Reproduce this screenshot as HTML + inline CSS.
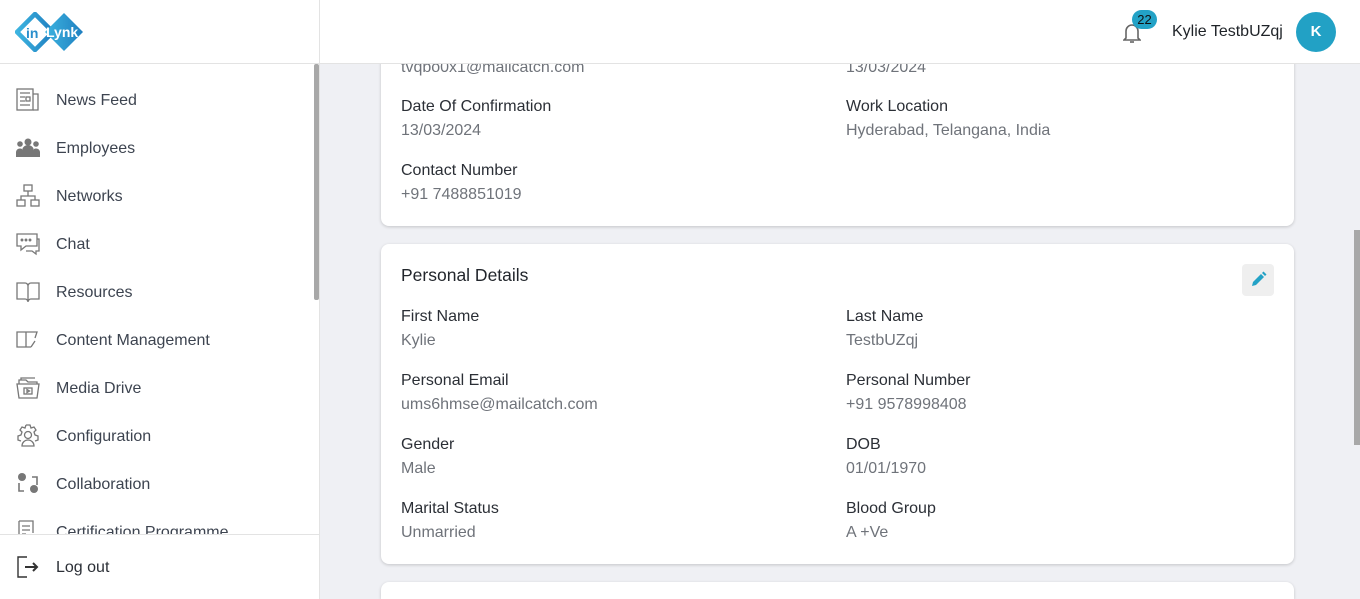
<!DOCTYPE html>
<html><head><style>
*{margin:0;padding:0;box-sizing:border-box}
html,body{width:1360px;height:599px;overflow:hidden}
body{background:#eff0f4;font-family:"Liberation Sans",sans-serif;position:relative}
.side{position:absolute;left:0;top:0;width:320px;height:599px;background:#fff;border-right:1px solid #e3e3e3}
.logo{height:64px;border-bottom:1px solid #e3e3e3;position:relative}
.nav{position:absolute;top:64px;left:0;width:319px;height:470px;overflow:hidden}
.item{position:absolute;left:0;height:48px;width:300px;font-size:16px;color:#3d4450}
.item svg{position:absolute;left:15px;top:11px;width:26px;height:26px}
.item span{position:absolute;left:56px;top:16px;white-space:nowrap}
.sb{position:absolute;left:314px;top:64px;width:5px;height:236px;background:#a8a8a8;border-radius:2px}
.logout{position:absolute;top:534px;left:0;width:319px;height:65px;border-top:1px solid #e3e3e3}
.top{position:absolute;left:320px;top:0;width:1040px;height:64px;background:#fff;border-bottom:1px solid #e3e3e3;z-index:2}
.card{position:absolute;left:381px;width:913px;background:#fff;border-radius:8px;box-shadow:0 1px 3px rgba(0,0,0,.18)}
.l{position:absolute;font-size:16px;color:#2b2f36}
.v{position:absolute;font-size:16px;color:#6f737a}
</style></head><body>
<div class="side">
 <div class="logo">
  <svg width="70" height="40" viewBox="0 0 70 40" style="position:absolute;left:15px;top:12px">
   <defs><linearGradient id="g" x1="0" x2="1"><stop offset="0" stop-color="#3db4e0"/><stop offset="1" stop-color="#1f7fc0"/></linearGradient></defs>
   <path d="M20 2 L38 20 L20 38 L2 20 Z" fill="none" stroke="url(#g)" stroke-width="4.5" stroke-linejoin="round"/>
   <path d="M49 1 L68 20 L49 39 L30 20 Z" fill="url(#g)"/>
   <text x="11" y="26" font-size="14" font-weight="bold" fill="#2a8fcc" font-family="Liberation Sans">in</text>
   <text x="31" y="25" font-size="14" font-weight="bold" fill="#fff" font-family="Liberation Sans">Lynk</text>
  </svg>
 </div>
 <div class="nav">
  <div class="item" style="top:12px"><svg viewBox="0 0 26 26" fill="none" stroke="#777" stroke-width="1.3"><rect x="2" y="2" width="16" height="21"/><path d="M18 7h5v16H18M5 6h10M5 10h5M5 14h5M5 18h10"/><rect x="11" y="10" width="4" height="4"/></svg><span>News Feed</span></div>
  <div class="item" style="top:60px"><svg viewBox="0 0 26 26" fill="#777"><circle cx="13" cy="7" r="3.5"/><circle cx="5" cy="9" r="2.8"/><circle cx="21" cy="9" r="2.8"/><path d="M7 22v-6a6 6 0 0 1 12 0v6zM1 22v-5a4 4 0 0 1 6-3v8zM25 22v-5a4 4 0 0 0-6-3v8z"/></svg><span>Employees</span></div>
  <div class="item" style="top:108px"><svg viewBox="0 0 26 26" fill="none" stroke="#777" stroke-width="1.3"><rect x="9" y="2" width="8" height="6"/><rect x="2" y="17" width="8" height="6"/><rect x="16" y="17" width="8" height="6"/><path d="M13 8v5M6 17v-4h14v4"/></svg><span>Networks</span></div>
  <div class="item" style="top:156px"><svg viewBox="0 0 26 26" fill="none" stroke="#777" stroke-width="1.3"><path d="M2 3h20v12H11l-5 4v-4H2z"/><path d="M22 8h2v12h-3v3l-4-3h-6"/><circle cx="7" cy="9" r=".8" fill="#777"/><circle cx="11" cy="9" r=".8" fill="#777"/><circle cx="15" cy="9" r=".8" fill="#777"/></svg><span>Chat</span></div>
  <div class="item" style="top:204px"><svg viewBox="0 0 26 26" fill="none" stroke="#777" stroke-width="1.3"><path d="M2 4h8a3 3 0 0 1 3 3v16a3 3 0 0 0-3-3H2zM24 4h-8a3 3 0 0 0-3 3v16a3 3 0 0 1 3-3h8z"/></svg><span>Resources</span></div>
  <div class="item" style="top:252px"><svg viewBox="0 0 26 26" fill="none" stroke="#777" stroke-width="1.3"><path d="M2 5h9v15H2zM11 5h11l-2 6M11 20h5M20 14l-4 6"/></svg><span>Content Management</span></div>
  <div class="item" style="top:300px"><svg viewBox="0 0 26 26" fill="none" stroke="#777" stroke-width="1.3"><path d="M2 9h22l-2 14H4z"/><path d="M4 9V5h7l2 2h9v2M6 5V3h14"/><rect x="9" y="13" width="8" height="6"/><path d="M12 14.5v3l2.5-1.5z"/></svg><span>Media Drive</span></div>
  <div class="item" style="top:348px"><svg viewBox="0 0 26 26" fill="none" stroke="#777" stroke-width="1.3"><path d="M11 2h4l1 3 3-1 2 3-2 2 1 3 3 1v4l-3 1M11 2l-1 3-3-1-2 3 2 2-1 3-3 1v4l3 1"/><circle cx="13" cy="12" r="3.5"/><path d="M7 23a6 6 0 0 1 12 0z"/></svg><span>Configuration</span></div>
  <div class="item" style="top:396px"><svg viewBox="0 0 26 26" fill="#777"><circle cx="7" cy="6" r="4"/><circle cx="19" cy="18" r="4"/><path d="M4 12v8h5M22 14V6h-5" fill="none" stroke="#777" stroke-width="1.6"/></svg><span>Collaboration</span></div>
  <div class="item" style="top:444px"><svg viewBox="0 0 26 26" fill="none" stroke="#777" stroke-width="1.3"><path d="M4 2h14v12M4 2v20h9M7 7h8M7 11h8M7 15h4"/><circle cx="18" cy="19" r="3"/></svg><span>Certification Programme</span></div>
 </div>
 <div class="sb"></div>
 <div class="logout"><div class="item" style="top:8px"><svg viewBox="0 0 26 26" fill="none" stroke="#333" stroke-width="1.4"><path d="M12 3H3v20h9M3 3v20"/><path d="M10 13h12M18 9l4 4-4 4" stroke-width="2"/></svg><span style="color:#2b2f36">Log out</span></div></div>
</div>
<div class="top">
 <svg style="position:absolute;left:803px;top:22px" width="18" height="22" viewBox="0 0 18 22" fill="none" stroke="#666" stroke-width="1.6"><path d="M3 16V9a6 6 0 0 1 12 0v7l2 2H1z"/><path d="M7 20h4"/></svg>
 <div style="position:absolute;left:812px;top:10px;width:25px;height:19px;border-radius:10px;background:#23a2c6;color:#111;font-size:13px;text-align:center;line-height:19px">22</div>
 <div style="position:absolute;left:852px;top:23px;font-size:16px;color:#1f2328">Kylie TestbUZqj</div>
 <div style="position:absolute;left:976px;top:12px;width:40px;height:40px;border-radius:50%;background:#22a1c5;color:#fff;font-size:15px;font-weight:bold;text-align:center;line-height:40px">K</div>
</div>
<div style="position:absolute;left:1354px;top:230px;width:6px;height:215px;background:#a8a8a8"></div>
<div class="card" style="top:20px;height:206px">
 <div class="v" style="left:20px;top:39px">tvqbo0x1@mailcatch.com</div>
 <div class="v" style="left:465px;top:39px">13/03/2024</div>
 <div class="l" style="left:20px;top:78px">Date Of Confirmation</div>
 <div class="v" style="left:20px;top:102px">13/03/2024</div>
 <div class="l" style="left:465px;top:78px">Work Location</div>
 <div class="v" style="left:465px;top:102px">Hyderabad, Telangana, India</div>
 <div class="l" style="left:20px;top:142px">Contact Number</div>
 <div class="v" style="left:20px;top:166px">+91 7488851019</div>
</div>
<div class="card" style="top:244px;height:320px">
 <div style="position:absolute;left:20px;top:21px;font-size:17.5px;color:#22262c">Personal Details</div>
 <div style="position:absolute;left:861px;top:20px;width:32px;height:32px;border-radius:4px;background:#efefef"><svg width="32" height="32" viewBox="0 0 32 32"><path d="M10 22l1-4 8-8 3 3-8 8z" fill="#23a2c6"/><path d="M20 9l1.5-1.5 3 3L23 12z" fill="#23a2c6"/></svg></div>
 <div class="l" style="left:20px;top:64px">First Name</div><div class="v" style="left:20px;top:88px">Kylie</div>
 <div class="l" style="left:465px;top:64px">Last Name</div><div class="v" style="left:465px;top:88px">TestbUZqj</div>
 <div class="l" style="left:20px;top:128px">Personal Email</div><div class="v" style="left:20px;top:152px">ums6hmse@mailcatch.com</div>
 <div class="l" style="left:465px;top:128px">Personal Number</div><div class="v" style="left:465px;top:152px">+91 9578998408</div>
 <div class="l" style="left:20px;top:192px">Gender</div><div class="v" style="left:20px;top:216px">Male</div>
 <div class="l" style="left:465px;top:192px">DOB</div><div class="v" style="left:465px;top:216px">01/01/1970</div>
 <div class="l" style="left:20px;top:256px">Marital Status</div><div class="v" style="left:20px;top:280px">Unmarried</div>
 <div class="l" style="left:465px;top:256px">Blood Group</div><div class="v" style="left:465px;top:280px">A +Ve</div>
</div>
<div class="card" style="top:582px;height:17px;border-radius:8px 8px 0 0"></div>
</body></html>
